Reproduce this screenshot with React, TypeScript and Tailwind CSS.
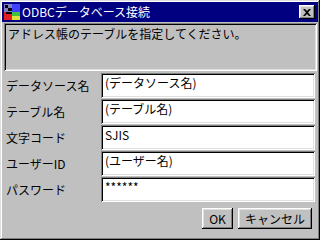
import React from 'react'

const font = { fontFamily: '"Noto Sans CJK JP", "Liberation Sans", sans-serif' }

const raised =
  'shadow-[inset_-1px_-1px_#000,inset_1px_1px_#fff,inset_-2px_-2px_#808080,inset_2px_2px_#dfdfdf]'
const sunken =
  'shadow-[inset_1px_1px_#808080,inset_-1px_-1px_#fff,inset_2px_2px_#000,inset_-2px_-2px_#dfdfdf]'

const fields = [
  { label: 'データソース名', value: '(データソース名)' },
  { label: 'テーブル名', value: '(テーブル名)' },
  { label: '文字コード', value: 'SJIS' },
  { label: 'ユーザーID', value: '(ユーザー名)' },
  { label: 'パスワード', value: '******' },
]

const OdbcIcon = () => (
  <svg width="16" height="16" viewBox="0 0 16 16" className="shrink-0">
    <rect x="0" y="0" width="8" height="8" fill="#8080c0" />
    <rect x="8" y="0" width="8" height="8" fill="#4040ff" />
    <rect x="0" y="8" width="8" height="8" fill="#e02020" />
    <rect x="8" y="8" width="8" height="8" fill="#40c040" />
    <rect x="8" y="12" width="8" height="4" fill="#e0e040" />
    <rect x="1" y="1" width="3" height="3" fill="#000" />
    <rect x="4" y="4" width="4" height="3" fill="#000" />
    <rect x="2" y="8" width="6" height="2" fill="#000" />
  </svg>
)

const Field = ({ label, value }: { label: string; value: string }) => (
  <div className="flex items-center h-[25px]">
    <div className="w-[97px] text-[12px] leading-[14px] text-black pl-[2px]">{label}</div>
    <div className={`flex-1 h-[25px] bg-white ${sunken} px-[4px] pt-[3px] text-[12px] leading-[14px] text-black`}>
      {value}
    </div>
  </div>
)

export default function App() {
  return (
    <div
      className="w-[320px] h-[240px] bg-[#c0c0c0] p-[2px] flex flex-col shadow-[inset_-1px_-1px_#000,inset_1px_1px_#dfdfdf,inset_-2px_-2px_#808080,inset_2px_2px_#fff]"
      style={font}
    >
      <div className="h-[20px] bg-[#000080] flex items-center pl-[2px] pr-[3px]">
        <OdbcIcon />
        <span className="ml-[2px] text-white text-[12px] leading-[14px]">ODBCデータベース接続</span>
        <div className={`ml-auto w-[16px] h-[14px] bg-[#c0c0c0] ${raised} flex items-center justify-center`}>
          <svg width="8" height="7" viewBox="0 0 8 7">
            <path d="M0 0h2l2 2 2-2h2L5 3.5 8 7H6L4 5 2 7H0l3-3.5z" fill="#000" />
          </svg>
        </div>
      </div>
      <div className="px-[2px] pt-[1px] pr-[1px] flex flex-col flex-1">
        <div className={`h-[48px] ${sunken} px-[4px] pt-[4px] text-[12px] leading-[14px] text-black`}>
          アドレス帳のテーブルを指定してください。
        </div>
        <div className="flex flex-col gap-[1px] mt-[2px] pr-[2px]">
          {fields.map(f => (
            <Field key={f.label} label={f.label} value={f.value} />
          ))}
        </div>
        <div className="flex justify-end gap-[5px] mt-[6px] pr-[5px]">
          <button className={`w-[31px] h-[21px] ${raised} text-[12px] leading-[14px] text-black`}>OK</button>
          <button className={`w-[74px] h-[21px] ${raised} text-[12px] leading-[14px] text-black`}>キャンセル</button>
        </div>
      </div>
    </div>
  )
}
